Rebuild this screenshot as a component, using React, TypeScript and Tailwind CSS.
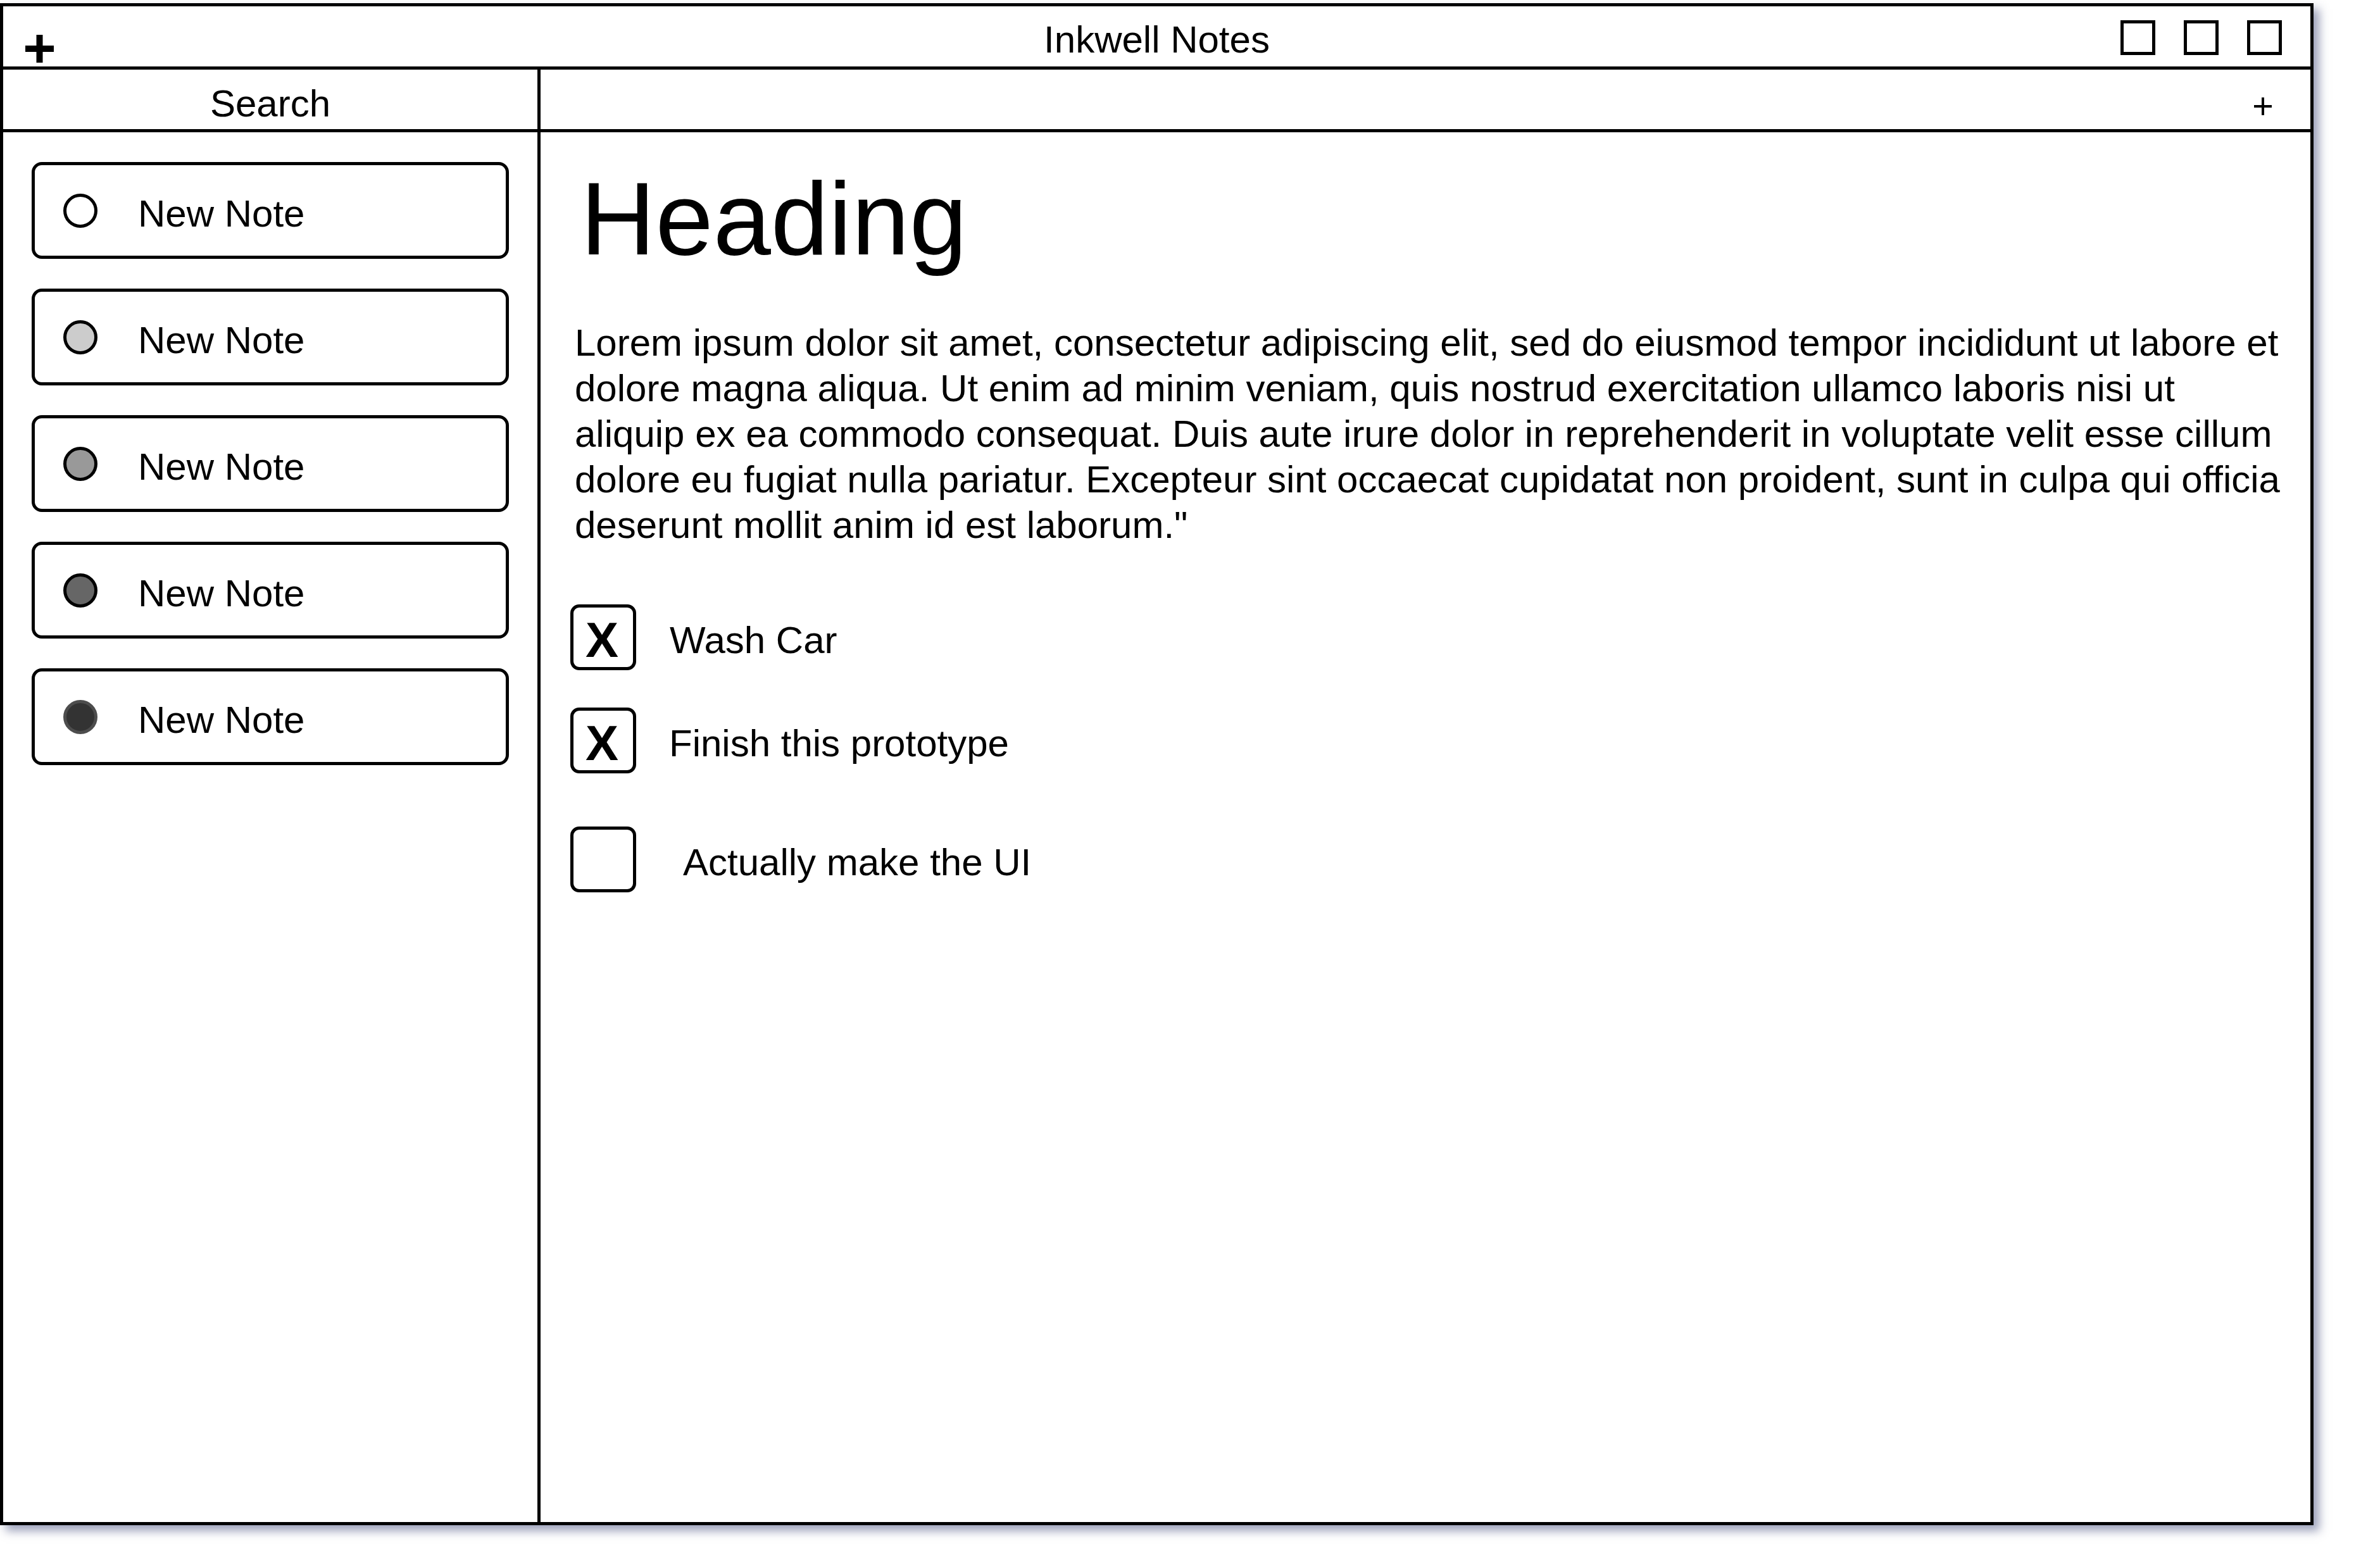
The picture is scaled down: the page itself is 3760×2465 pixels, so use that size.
import { Fragment } from 'react';

const notes = [
  'bg-white border-black',
  'bg-[#cccccc] border-black',
  'bg-[#999999] border-black',
  'bg-[#666666] border-black',
  'bg-[#333333] border-[#4d4d4d]',
];

const lorem = [
  'Lorem ipsum dolor sit amet, consectetur adipiscing elit, sed do eiusmod tempor incididunt ut labore et',
  'dolore magna aliqua. Ut enim ad minim veniam, quis nostrud exercitation ullamco laboris nisi ut',
  'aliquip ex ea commodo consequat. Duis aute irure dolor in reprehenderit in voluptate velit esse cillum',
  'dolore eu fugiat nulla pariatur. Excepteur sint occaecat cupidatat non proident, sunt in culpa qui officia',
  'deserunt mollit anim id est laborum."',
];

const todos = [
  { label: 'Wash Car', done: true, rowClass: '', textClass: 'ml-[53px]' },
  { label: 'Finish this prototype', done: true, rowClass: 'mt-[59px]', textClass: 'ml-[52px]' },
  { label: 'Actually make the UI', done: false, rowClass: 'mt-[84px]', textClass: 'ml-[74px]' },
];

function NoteItem({ dot }: { dot: string }) {
  return (
    <div className="flex h-[153px] items-center rounded-[16px] border-[5px] border-black pl-[45px]">
      <span className={`size-[54px] shrink-0 rounded-full border-[5px] ${dot}`} />
      <span className="ml-[64px] pt-[10px] text-[60px] leading-normal">New Note</span>
    </div>
  );
}

function TodoRow({ label, done, rowClass, textClass }: (typeof todos)[number]) {
  return (
    <div className={`flex items-center ${rowClass}`}>
      <div className="flex size-[104px] shrink-0 items-center justify-center rounded-[14px] border-[5px] border-black">
        {done ? <span className="pt-[7px] pr-[4px] text-[78px] font-bold leading-none">X</span> : null}
      </div>
      <span className={`pt-[10px] text-[60px] leading-normal ${textClass}`}>{label}</span>
    </div>
  );
}

export default function App() {
  return (
    <div className="min-h-screen bg-white pt-[5px] font-['Liberation_Sans',Arial,sans-serif] text-black">
      <div className="flex h-[2405px] w-[3655px] flex-col border-[5px] border-black bg-white shadow-[9px_9px_14px_rgba(60,70,120,0.5)]">
        {/* title bar */}
        <div className="grid h-[100px] shrink-0 grid-cols-[1fr_auto_1fr] border-b-[5px] border-black">
          <div className="flex items-end pb-[9px] pl-[35px]">
            <svg width="45" height="44" viewBox="0 0 45 44" aria-hidden>
              <rect x="17.5" y="0" width="10" height="44" fill="black" />
              <rect x="0" y="17" width="45" height="10" fill="black" />
            </svg>
          </div>
          <div className="flex items-center pt-[8px] text-[60px] leading-normal">Inkwell Notes</div>
          <div className="flex items-center justify-end gap-[45px] pr-[45px]">
            <span className="size-[55px] border-[5px] border-black" />
            <span className="size-[55px] border-[5px] border-black" />
            <span className="size-[55px] border-[5px] border-black" />
          </div>
        </div>

        {/* search / tab row */}
        <div className="flex h-[99px] shrink-0 border-b-[5px] border-black">
          <div className="flex w-[849px] shrink-0 items-center justify-center border-r-[5px] border-black pt-[13px] text-[60px] leading-normal">
            Search
          </div>
          <div className="flex flex-1 items-center justify-end pr-[61px] pt-[21px]">
            <svg width="28" height="28" viewBox="0 0 28 28" aria-hidden>
              <rect x="12" y="0" width="4" height="28" fill="black" />
              <rect x="0" y="12" width="28" height="4" fill="black" />
            </svg>
          </div>
        </div>

        {/* body */}
        <div className="flex min-h-0 flex-1">
          <aside className="flex w-[849px] shrink-0 flex-col gap-[47px] border-r-[5px] border-black px-[45px] pt-[47px]">
            {notes.map((dot, i) => (
              <NoteItem key={i} dot={dot} />
            ))}
          </aside>

          <main className="flex-1 pl-[47px]">
            <h1 className="ml-[16px] mt-[55px] text-[164px] leading-none">Heading</h1>
            <p className="ml-[7px] mt-[78px] text-[60px] leading-[72px]">
              {lorem.map((line) => (
                <Fragment key={line}>
                  <span className="block whitespace-nowrap">{line}</span>
                </Fragment>
              ))}
            </p>
            <div className="mt-[89px]">
              {todos.map((t) => (
                <TodoRow key={t.label} {...t} />
              ))}
            </div>
          </main>
        </div>
      </div>
    </div>
  );
}
